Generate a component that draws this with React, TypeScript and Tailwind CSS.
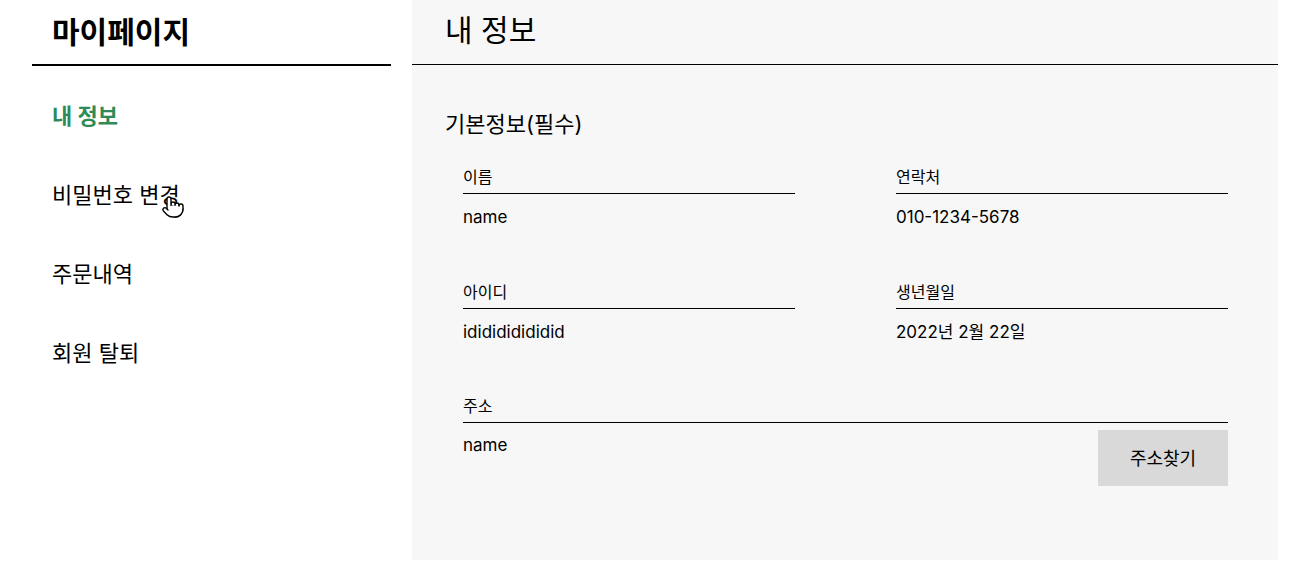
import { Pointer } from "lucide-react";

const fields = [
  [
    { label: "이름", value: "name" },
    { label: "연락처", value: "010-1234-5678" },
  ],
  [
    { label: "아이디", value: "ididididididid" },
    { label: "생년월일", value: "2022년 2월 22일" },
  ],
];

const menu = ["내 정보", "비밀번호 변경", "주문내역", "회원 탈퇴"];

function Field({ label, value }: { label: string; value: string }) {
  return (
    <div>
      <div className="border-b border-black pb-[4px] text-[16px] leading-[23px]">{label}</div>
      <div className="mt-[11px] text-[17px] leading-[24px]">{value}</div>
    </div>
  );
}

export default function App() {
  return (
    <div
      className="flex w-[1310px] h-[580px] bg-white pl-[32px] text-black"
      style={{ fontFamily: 'Inter, "Noto Sans CJK KR", sans-serif' }}
    >
      <aside className="relative w-[359px]">
        <h1 className="flex h-[66px] items-center border-b-2 border-black pl-[20px] text-[30px] font-bold">
          마이페이지
        </h1>
        <ul className="pt-[11px]">
          {menu.map((item, i) => (
            <li
              key={item}
              className={
                i === 0
                  ? "flex h-[79px] items-center pl-[20px] text-[22px] font-bold text-[#2e8b57]"
                  : "flex h-[79px] items-center pl-[20px] text-[22px]"
              }
            >
              {item}
            </li>
          ))}
        </ul>
        <Pointer
          className="absolute left-[129px] top-[195px] fill-white"
          size={24}
          strokeWidth={1.4}
        />
      </aside>

      <main className="ml-[21px] h-[560px] w-[866px] bg-[#f7f7f7]">
        <div className="flex h-[65px] items-center border-b border-black px-[33px] pb-[4px] text-[30px]">
          내 정보
        </div>
        <section className="pl-[33px] pr-[50px] pt-[44px]">
          <h2 className="text-[22px] leading-[30px]">기본정보(필수)</h2>
          <div className="ml-[18px] mt-[27px] flex flex-col">
            {fields.map((row, r) => (
              <div
                key={r}
                className={
                  r === 0
                    ? "grid grid-cols-[332px_332px] gap-x-[101px]"
                    : "mt-[52px] grid grid-cols-[332px_332px] gap-x-[101px]"
                }
              >
                {row.map((f) => (
                  <Field key={f.label} {...f} />
                ))}
              </div>
            ))}
            <div className="mt-[51px]">
              <div className="border-b border-black pb-[4px] text-[16px] leading-[23px]">주소</div>
              <div className="mt-[7px] flex items-start justify-between">
                <div className="mt-[3px] text-[17px] leading-[24px]">name</div>
                <button className="h-[56px] w-[130px] bg-[#d9d9d9] text-[18px]">주소찾기</button>
              </div>
            </div>
          </div>
        </section>
      </main>
    </div>
  );
}
